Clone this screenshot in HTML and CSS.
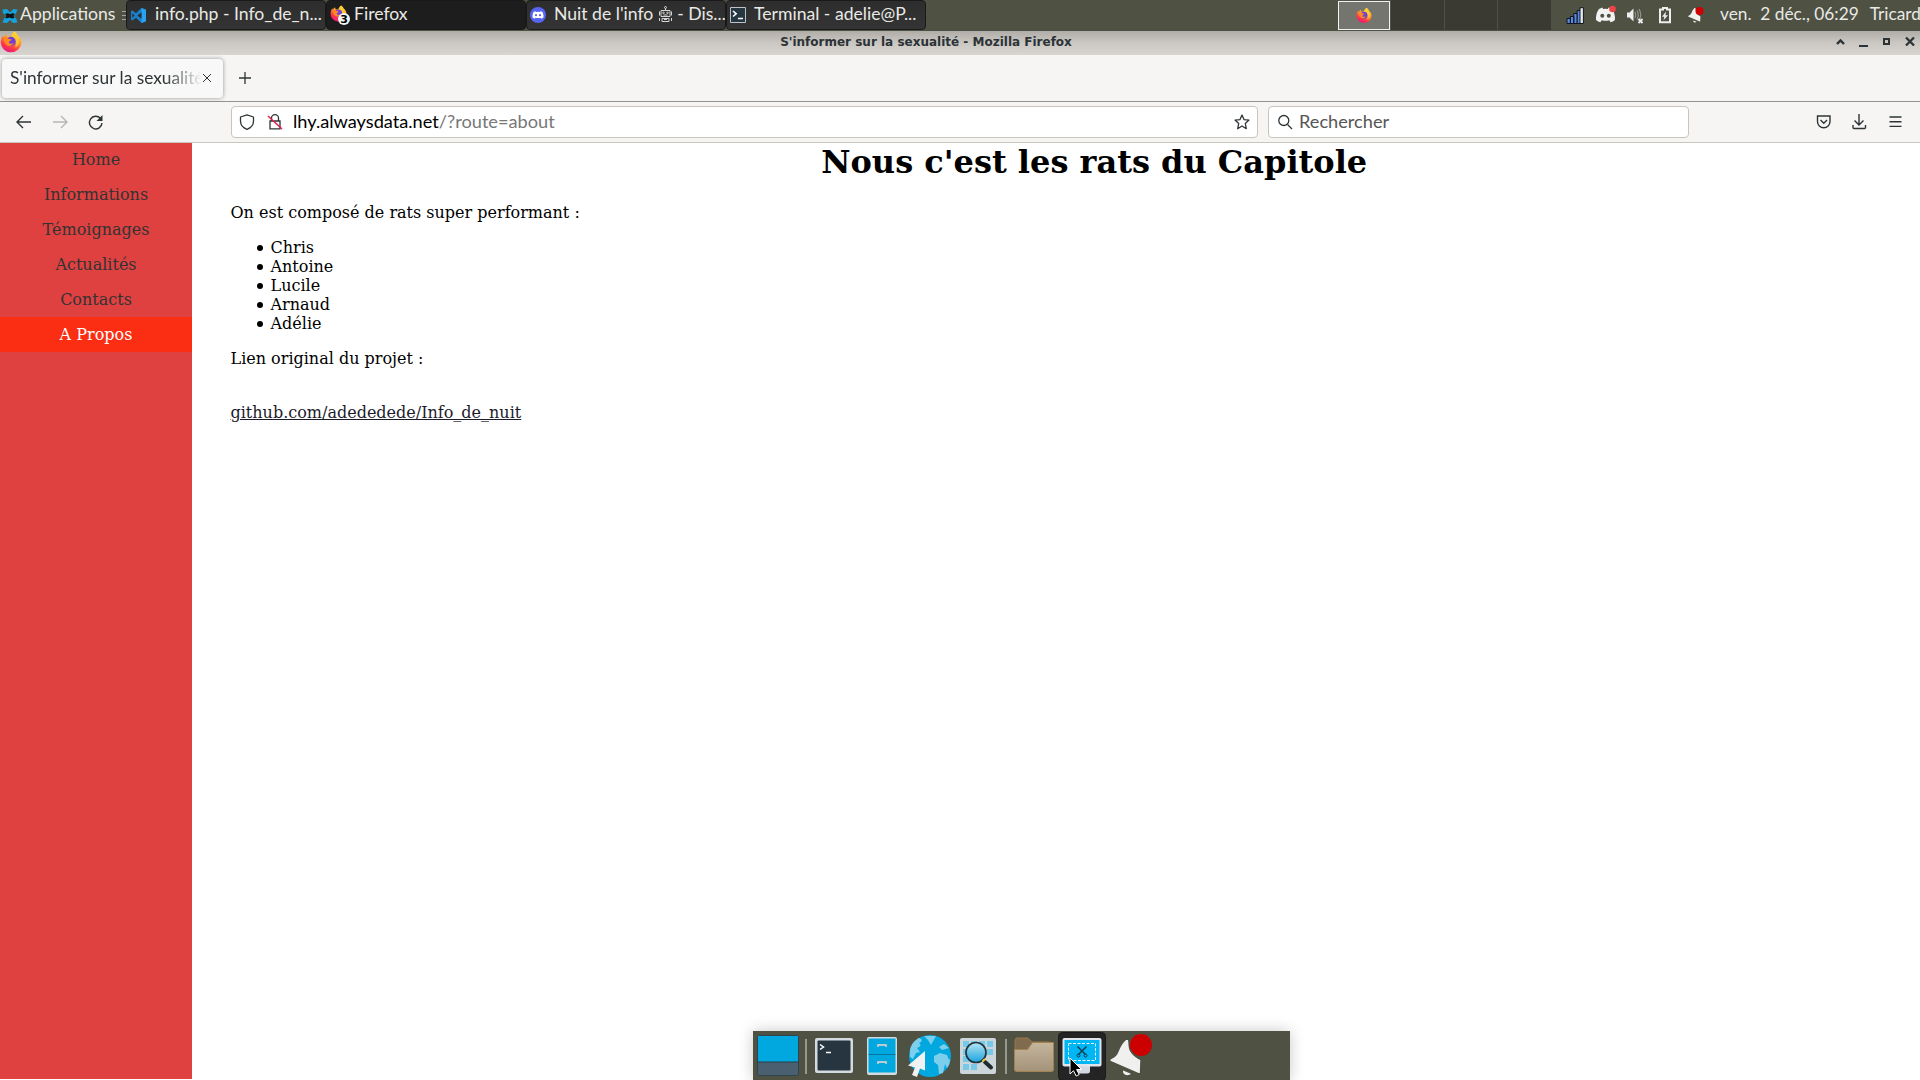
FILE: index.html
```html
<!DOCTYPE html>
<html lang="fr">
<head>
<meta charset="utf-8">
<title>S'informer sur la sexualité</title>
<link rel="stylesheet" href="styles.css">
</head>
<body>
<svg class="defs" width="0" height="0" aria-hidden="true">
  <defs>
    <linearGradient id="fire" x1="0.8" y1="0" x2="0.3" y2="1">
      <stop offset="0" stop-color="#ffe838"/><stop offset="0.4" stop-color="#ff9a2a"/>
      <stop offset="0.75" stop-color="#ff3647"/><stop offset="1" stop-color="#e31587"/>
    </linearGradient>
    <linearGradient id="folder" x1="0" y1="0" x2="0" y2="1">
      <stop offset="0" stop-color="#c4b59d"/><stop offset="1" stop-color="#a49379"/>
    </linearGradient>
    <linearGradient id="lens" x1="0" y1="0" x2="0" y2="1">
      <stop offset="0" stop-color="#b4e5f5"/><stop offset="1" stop-color="#1aa4dc"/>
    </linearGradient>
    <symbol id="firefox" viewBox="0 0 22 22">
      <path d="M14.5 0.5c1.8 1.2 2.8 2.4 3.2 4.1 2.300 1.600 3.700 4.300 3.700 7.100A10.400 10 0 0 1 11 21.300 10.300 10 0 0 1 .700 11.500c0-3 .9-5.500 2.300-7.300l.7 2c.6-1 1.700-2.600 2.800-3.200.1 1 .6 2.200 1.400 2.700 1-.2 2-.2 2.700 0C11.500 3.500 12.500 1.500 14.500.5z" fill="url(#fire)"/>
      <path d="M14 1c2.500 2.200 5.500 5.500 5 11-.6 3-2.500 4-4 4.400 1.500-3 1.500-6-.5-8-1.500-1-3-1.800-3.200-3.200z" fill="#ffd230" opacity=".75"/>
      <circle cx="11" cy="10.500" r="4.700" fill="#7340d6"/>
      <path d="M3.500 7.500c2-.9 4-.6 5 .3l3 .7c-.3 1.300-2.300 1.500-2.800 2.700.6 1.900 3.500 2 5 .9-1 3-5.200 3.900-7.700 1.300-1.500-1.600-2.500-4-2.500-5.900z" fill="#ff8a20"/>
    </symbol>
    <symbol id="discord" viewBox="0 0 24 20">
      <path d="M8.500 1.500 9.200 3q2.800-.5 5.600 0l.7-1.500 4 1.600q4 6 3.300 12.500-2.300 2-5 2.600l-1.400-2.300q-4.400 1.300-8.800 0l-1.400 2.300q-2.700-.6-5-2.600Q.5 9 4.500 3.100z" fill="currentColor"/>
    </symbol>
    <symbol id="bell" viewBox="0 0 34 40">
      <path d="M16.500 2.500c-3.500 3-5.500 7-8.500 14-1.300 3-5 5-7.600 6.300v1L29.500 36.500h1.200l.5-13.500c-7-2.500-11.500-8.500-11.700-15.500L18.500 2.500z" fill="#f0f0ef"/>
      <path d="M13.500 34l8 3.200c-3 3-9 1.300-8-3.200z" fill="#f0f0ef"/>
    </symbol>
  </defs>
</svg>

<header class="panel">
  <div class="apps">
    <svg width="16" height="16" viewBox="0 0 16 16"><path d="M0.500 1.500 5 1l3 3.500L11.500 1l4 .5L14 5.500 12 8l2.500 3 .8 3.500-4.300.5L8 12l-3 3-4.500-.5L2 10.500 4 8 1 5z" fill="#15a3dd"/><path d="M3 6l3-.7 2 1 2-1 3 .5-1.500 2 1 2.200-3 .5L8 9.500l-3 .8L3 10l1.500-2z" fill="#111"/></svg>
    <span>Applications</span>
    <i class="grip"></i>
  </div>
  <nav class="tasks">
    <div class="task">
      <svg width="15" height="15" viewBox="0 0 15 15"><path d="M10.500 0 15 1.800v11.400L10.500 15 5 9.700 1.500 12.500 0 11.800V3.200l1.500-.7L5 5.300z" fill="#1b80cc"/><path d="M10.500 0 15 1.800v11.400L10.500 15z" fill="#27a3ef"/><path d="M10.500 4.200v6.600L6.300 7.500zM1.300 5.200v4.600l2.300-2.300z" fill="#2c2d2f"/></svg>
      <span>info.php - Info_de_n...</span>
    </div>
    <div class="task active">
      <svg width="20" height="20" viewBox="0 0 20 20"><use href="#firefox" width="17" height="17"/><circle cx="14" cy="14" r="6" fill="#f4f4f4"/><text x="14" y="18" text-anchor="middle" class="badge">3</text></svg>
      <span>Firefox</span>
    </div>
    <div class="task">
      <svg width="16" height="16" viewBox="0 0 16 16"><circle cx="8" cy="8" r="8" fill="#5765f2"/><path d="M5.500 4.300 6 5q2-.3 4 0l.5-.7 2 .7q1.300 3 1 5.500l-2.300 1.200-.7-1q-2.500.5-5 0l-.7 1-2.300-1.200Q2.300 8 3.500 5z" fill="#fff"/><circle cx="6" cy="8.200" r="1.100" fill="#5765f2"/><circle cx="10" cy="8.200" r="1.100" fill="#5765f2"/></svg>
      <span>Nuit de l'info <svg class="robot" width="15" height="16" viewBox="0 0 15 16" fill="none" stroke="#d6d6d4" stroke-width="1"><circle cx="7.500" cy="1.500" r="1"/><path d="M7.500 2.500v2M3 4.500h9v6H3zM1.500 5.500v4M13.500 5.500v4M5.500 9h4M4 12.500h7v3H4zM1.500 12v3M13.500 12v3M6 13.500h3"/><circle cx="5.500" cy="6.800" r=".8"/><circle cx="9.500" cy="6.800" r=".8"/></svg> - Dis...</span>
    </div>
    <div class="task">
      <svg width="16" height="16" viewBox="0 0 16 16"><path d="M.5.500h15v15H.5z" fill="#263742" stroke="#b9c3c9"/><path d="M3 4l3.200 2.800L3 9.500M8 11.500h5" fill="none" stroke="#fff" stroke-width="1.600"/></svg>
      <span>Terminal - adelie@P...</span>
    </div>
  </nav>
  <div class="pager">
    <div class="desk current"><svg width="16" height="17"><use href="#firefox" width="16" height="17"/></svg></div>
    <div class="desk"></div><div class="desk"></div><div class="desk"></div>
  </div>
  <div class="tray">
    <svg class="net" width="18" height="17" viewBox="0 0 18 17" fill="#5a8be0" stroke="#10151f"><path d="M1 11.500h3.400v5H1zM4.400 9.500h3.400v7H4.400zM7.800 6.500h3.400v10H7.800z"/><path d="M11.200 3.500h3.400v13h-3.400z"/><path d="M14 .7h3.400v15.800H14z" fill="#e9e9ec"/></svg>
    <svg class="disc" width="22" height="20" viewBox="0 0 22 20"><g color="#f2f2f2"><use href="#discord" y="1" width="21" height="18"/></g><circle cx="7.300" cy="10.700" r="2" fill="#4f5143"/><circle cx="13.800" cy="10.700" r="2" fill="#4f5143"/><circle cx="17.500" cy="4" r="3.300" fill="#ef4444"/></svg>
    <svg class="vol" width="17" height="17" viewBox="0 0 17 17"><path d="M0 4.500h2.500L6.500.5v13L2.500 9.500H0z" fill="#eee"/><path d="M8 4q1.500 3 0 6M10 2.500q2.500 4.500 0 9M12 1q3.500 6 0 12" fill="none" stroke="#91938a" stroke-width="1.200"/><path d="M11.500 11l4 4m0-4-4 4" stroke="#eee" stroke-width="1.800"/></svg>
    <svg class="bat" width="12" height="18" viewBox="0 0 12 18"><path d="M4 1h4v1.500h3v12.700H1V2.500h3z" fill="none" stroke="#eee" stroke-width="2"/><path d="M7 4.500 3 9.800h2.300l-.8 3.500L9 8.300H6.500z" fill="#eee"/></svg>
    <svg class="bel" width="16" height="17" viewBox="0 0 16 17"><use href="#bell" x="0" y="1" width="13.500" height="16"/><circle cx="11.500" cy="5" r="4" fill="#d00000"/></svg>
    <time>ven.&nbsp; 2 déc., 06:29</time>
    <span class="user">Tricard</span>
  </div>
</header>

<div class="titlebar">
  <svg width="22" height="22"><use href="#firefox" width="22" height="22"/></svg>
  <span class="title">S'informer sur la sexualité - Mozilla Firefox</span>
  <svg class="winbtns" width="80" height="12" viewBox="0 0 80 12" fill="none" stroke="#2b3336" stroke-width="2"><path d="M2 8l3.500-3.500L9 8" stroke-width="2.400"/><path d="M24 10h9"/><path d="M49 3h5v5h-5z"/><path d="M71 1.500l8 8m0-8-8 8" stroke-width="2.300"/></svg>
</div>

<div class="tabstrip">
  <div class="tab"><span class="tabtext">S'informer sur la sexualité</span><svg width="10" height="10" viewBox="0 0 10 10" stroke="#2e3436"><path d="M1 1l8 8M9 1 1 9"/></svg></div>
  <svg width="12" height="12" viewBox="0 0 12 12" stroke="#2e3436" stroke-width="1.300"><path d="M6 0v12M0 6h12"/></svg>
</div>

<div class="toolbar">
  <svg class="navs" width="90" height="18" viewBox="0 0 90 18" fill="none" stroke="#2e3436" stroke-width="1.400"><path d="M15 9H1.500M7 3 1 9l6 6"/><path d="M37 9h13.500M45 3l6 6-6 6" stroke="#b5b5b4"/><path d="M84.500 5.500A6.300 6.300 0 1 0 86 10"/><path d="M86.500 2v6h-6z" fill="#2e3436" stroke="none"/></svg>
  <div class="field url">
    <svg width="16" height="16" viewBox="0 0 16 16" fill="none" stroke="#2e3436" stroke-width="1.300"><path d="M8 .8 14.500 3v4c0 4-2.500 6.800-6.500 8.300C4 13.800 1.500 11 1.500 7V3z" stroke-linejoin="round"/></svg>
    <svg class="lock" width="16" height="16" viewBox="0 0 16 16" fill="none" stroke="#2e3436" stroke-width="1.300"><path d="M4.500 7V4.200a3.500 3.500 0 0 1 7 0V7M3 7h10v7.800H3z"/><path d="M1 2l14 13" stroke="#e3224f" stroke-width="1.600"/></svg>
    <span class="addr">lhy.alwaysdata.net<em>/?route=about</em></span>
    <svg class="star" width="16" height="16" viewBox="0 0 16 16" fill="none" stroke="#2e3436" stroke-width="1.300" stroke-linejoin="round"><path d="M8 1l2 4.600 5 .5-3.700 3.400 1 5.200L8 12l-4.300 2.700 1-5.200L1 6.100l5-.5z"/></svg>
  </div>
  <div class="field search">
    <svg width="16" height="16" viewBox="0 0 16 16" fill="none" stroke="#2e3436" stroke-width="1.300"><circle cx="6.800" cy="6.500" r="5"/><path d="M10.500 10.500l4.500 4.500"/></svg>
    <span class="hint">Rechercher</span>
  </div>
  <svg class="tools" width="88" height="18" viewBox="0 0 88 18" fill="none" stroke="#2e3436" stroke-width="1.400"><path d="M1.500 3h12.500v5.500a6.200 6.200 0 0 1-12.500 0zM4.500 7l3.300 3.200L11 7"/><path d="M43 1v10.500M38.500 7.500l4.500 4.500L47.500 7.500M37 12v2.500a1 1 0 0 0 1 1h10.500a1 1 0 0 0 1-1V12"/><path d="M73.500 4h12M73.500 8.700h12M73.500 13.400h12"/></svg>
</div>

<main class="page">
  <nav class="side">
    <a>Home</a><a>Informations</a><a>Témoignages</a><a>Actualités</a><a>Contacts</a><a class="on">A Propos</a>
  </nav>
  <article class="content">
    <h1>Nous c'est les rats du Capitole</h1>
    <p>On est composé de rats super performant :</p>
    <ul><li>Chris</li><li>Antoine</li><li>Lucile</li><li>Arnaud</li><li>Adélie</li></ul>
    <p>Lien original du projet :</p>
    <a class="link">github.com/adededede/Info_de_nuit</a>
  </article>
</main>

<footer class="dock">
  <svg width="537" height="49" viewBox="0 0 537 49">
    <rect x="4.500" y="4.500" width="41" height="40" rx="2" fill="#4a6070" stroke="#30434e"/><path d="M5 5h40v26H5z" fill="#00a8df"/><path d="M4.500 31h41" stroke="#2a3c46"/>
    <path d="M53 8v35M253 8v35" stroke="#97988e" stroke-width="2"/>
    <rect x="62" y="7" width="38" height="35" rx="2" fill="#d3dae0"/><rect x="64.500" y="9.500" width="33" height="30" rx="1" fill="#263540"/><path d="M67 13.500l3.500 2.500-3.500 2.500M73 21.500h5" fill="none" stroke="#fff" stroke-width="1.500"/>
    <rect x="114" y="6" width="30" height="38" rx="2" fill="#d3dae0"/><path d="M115.500 7.500h27v34h-27z" fill="#00a8df"/><path d="M115.500 23.500h27" stroke="#08759b"/><path d="M125 16v-2h8v2M125 33v-2h8v2" fill="none" stroke="#b9cbd4" stroke-width="1.800"/>
    <circle cx="177" cy="25" r="21" fill="#00a8df"/><path d="M171 5l12 0-5 9-3-5zM157 19c1-6 5-10 9-12 4 1 3 4 0 5 3 2 1 4-2 5l3 4-4 1-3 6-3-2zM181 25l6-3 7 2 2 5-4 4-2 9-4 1-1-9-4-3zM186 16l5-3 5 4-7 2zM191 31l6-3c0 4-1 7-3 9z" fill="#7bcfec"/><path d="M172 20v19.500l-5-2-3 8.500-5-2 3-7.500-7-2z" fill="#f1f1f1"/>
    <rect x="207" y="7" width="36" height="36" rx="2" fill="#ccd5da"/><path d="M210 10h6v6h-6zM218 10h6v6h-6zM226 10h6v6h-6zM234 10h6v6h-6zM210 18h6v6h-6zM234 18h6v6h-6zM210 25h6v6h-6zM210 33h6v6h-6zM218 33h6v6h-6z" fill="#74cae8"/><circle cx="223" cy="21.500" r="10" fill="url(#lens)" stroke="#23323c" stroke-width="1.700"/><path d="M232 31l6 5.500" stroke="#1f2a31" stroke-width="4" stroke-linecap="round"/><path d="M229.500 30.500l2.500-2.500" stroke="#f0c830" stroke-width="2"/>
    <path d="M262 10q0-3 2-3h11l4 4h17q2 0 2 2v8h-36z" fill="#806b4f" stroke="#9a7846"/><path d="M261.500 18.500h13l5-7h21v27q0 2-2 2h-35q-2 0-2-2z" fill="url(#folder)" stroke="#a18251"/>
    <rect x="305.500" y="1.500" width="47" height="48" rx="4" fill="#242424" stroke="#1a1a1a"/><path d="M324 35h13v5q0 2.500-3 2.500h-10z" fill="#d3d9e2"/><rect x="309.500" y="7" width="39" height="28.500" rx="2" fill="#dfe5ea"/><path d="M311.500 9h35v24h-35z" fill="#00b7f5"/><path d="M315.500 12.500h27v17h-27z" fill="none" stroke="#e4f7fd" stroke-dasharray="3 1.500"/><path d="M324.500 15.500l8 8M333.500 15.500l-8 8" stroke="#123c4d" stroke-width="1.500"/><circle cx="325.500" cy="24.500" r="1.500" fill="none" stroke="#123c4d"/><circle cx="332.500" cy="24.500" r="1.500" fill="none" stroke="#123c4d"/>
    <path d="M317 27v16l3.500-3.300 2.700 5.300 3-1.500-2.600-5H328.500z" fill="#000" stroke="#fff"/>
    <use href="#bell" x="357" y="6" width="33" height="40"/><circle cx="388" cy="14" r="12.500" fill="#4f5143"/><circle cx="388" cy="14" r="11" fill="#cc0000"/>
  </svg>
</footer>
</body>
</html>
```
FILE: styles.css
```css
* { box-sizing: border-box; }
html, body { margin: 0; height: 100%; overflow: hidden; }
body {
  display: flex; flex-direction: column; position: relative;
  background: #fff; color: #000;
  font-family: Lato, "Noto Sans", sans-serif; font-size: 17.300px;
}
svg { display: block; flex: none; }
.defs { position: absolute; }

.panel {
  display: flex; flex: none; height: 31px; background: #4f5143;
  color: #e9e9e5; line-height: 28px; white-space: nowrap;
}
.apps { display: flex; flex: none; align-items: center; width: 126px; padding-left: 2px; gap: 2px; font-size: 17.650px; }
.apps span { flex: none; width: 97px; height: 31px; }
.grip { width: 4px; height: 9px; margin-left: 3px; background: repeating-linear-gradient(#a3a59a 0 1px, transparent 1px 4px); }
.tasks { display: flex; flex: none; width: 1212px; font-size: 17.600px; }
.task {
  display: flex; align-items: center; width: 200px; height: 30px; padding-left: 4px; gap: 9px;
  border: 1px solid #191919; border-radius: 4px; background: linear-gradient(#2d2d2d, #343434);
  overflow: hidden;
}
.task > svg + span { height: 29px; margin-top: -1px; }
.task:nth-child(n+3) { padding-left: 3px; gap: 8px; }
.task.active { gap: 4px; padding-left: 3px; background: #1d1d1d; }
.badge { font: bold 11px "DejaVu Sans", sans-serif; fill: #000; }
.robot { display: inline-block; vertical-align: -2px; }
.pager { display: flex; flex: none; width: 213px; }
.desk { flex: 1; height: 30px; background: #3a3a33; border-left: 1px solid #4f5143; }
.desk.current {
  display: flex; flex: none; align-items: center; justify-content: center; width: 52px; height: 29px; margin-top: 1px;
  background: #74756f; border: 1px solid #f2f2f2;
}
.tray { display: flex; flex: 1; padding-left: 15px; }
.tray .net { margin-top: 7px; }
.tray .disc { margin: 5px 0 0 11px; }
.tray .vol { margin: 8px 0 0 10px; }
.tray .bat { margin: 7px 0 0 15px; }
.tray .bel { margin: 6px 0 0 17px; }
.tray time { margin-left: 16px; }
.tray .user { margin-left: 11px; }

.titlebar {
  display: flex; flex: none; align-items: center; height: 24px; padding-bottom: 2px;
  background: linear-gradient(#b0aca8, #cbc7c3 50%, #d8d4d0); color: #2b3336;
  font: bold 12px/20px "DejaVu Sans", sans-serif;
}
.titlebar .title { flex: 1; text-align: center; padding-right: 5px; }
.winbtns { margin-right: 5px; }

.tabstrip {
  display: flex; flex: none; align-items: center; gap: 16px; height: 47px; padding-left: 2px;
  background: #f6f5f4; border-bottom: 1px solid #949390; color: #2e3436;
}
.tab {
  display: flex; align-items: center; width: 221px; height: 39px; padding-left: 8px;
  border-radius: 4px; background: #f9f8f8; box-shadow: 0 0 4px rgba(0, 0, 0, .4);
}
.tabtext {
  width: 192px; padding-bottom: 2px; overflow: hidden; white-space: nowrap;
  mask-image: linear-gradient(to right, #000 155px, transparent 192px);
}

.toolbar {
  display: flex; flex: none; align-items: center; height: 41px; padding-left: 16px;
  background: #f6f5f4; border-bottom: 1px solid #c9c5bf;
}
.field {
  display: flex; align-items: center; height: 32px; border: 1px solid #c7c5bd; border-radius: 4px;
  background: #fff; color: #555; font-size: 18.200px;
}
.url { width: 1027px; margin-left: 125px; padding-left: 7px; }
.lock { margin-left: 12px; }
.addr, .hint { padding-bottom: 3px; }
.addr { margin-left: 10px; color: #000; }
.addr em { color: #777; font-style: normal; }
.star { margin: 0 7px 0 auto; }
.search { width: 421px; margin-left: 10px; padding-left: 8px; gap: 6px; }
.tools { margin-left: 127px; }

.page {
  display: flex; flex: 1; min-height: 0; border-bottom: 1px solid #fff;
  font: 16px/19px "DejaVu Serif", serif;
}
.side { display: flex; flex-direction: column; width: 192px; background: #df4141; }
.side a { height: 35px; line-height: 35px; text-align: center; color: #333; }
.side a:first-child { height: 34px; line-height: 33px; }
.side a.on { background: #fb2d13; color: #fff; }
.content { flex: 1; padding-left: 38.500px; }
.content h1 { margin: 0; height: 38px; font-size: 32px; line-height: 38px; text-align: center; padding-left: 38px; }
.content p { margin: 22px 0 0; }
.content ul { margin: 16px 0 0; padding-left: 40px; list-style: none; }
.content li::before {
  content: ""; display: inline-block; width: 6px; height: 6px; margin: 0 8px 0 -14px;
  border-radius: 50%; background: #000; vertical-align: 2px;
}
.content ul + p { margin-top: 16px; }
.link { display: block; margin-top: 35px; color: #1c1b2c; text-decoration: underline; }

.dock {
  position: absolute; left: 753px; bottom: 0; width: 537px; height: 49px;
  background: #4f5143; box-shadow: 0 0 14px rgba(0, 0, 0, .22);
}
```
